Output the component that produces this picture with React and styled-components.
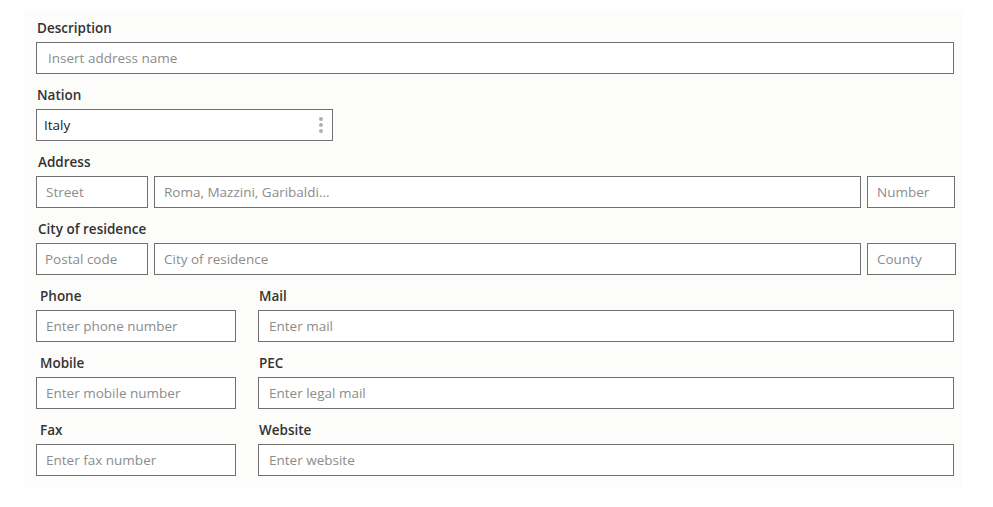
import React from 'react';
import styled, { createGlobalStyle } from 'styled-components';

const GlobalStyle = createGlobalStyle`
  html, body {
    margin: 0;
    padding: 0;
    background: #ffffff;
  }
  body {
    font-family: "Open Sans", "Noto Sans", "Liberation Sans", sans-serif;
  }
  * {
    box-sizing: border-box;
  }
`;

const Panel = styled.div`
  margin: 11px 0 0 24px;
  width: 939px;
  padding: 7px 7px 0 12px;
  background: #fcfdfb;
`;

const Row = styled.div`
  display: flex;
  gap: 6px;
`;

const Field = styled.div`
  display: flex;
  flex-direction: column;
  width: ${(p) => (p.width ? `${p.width}px` : 'auto')};
  flex: ${(p) => (p.width ? '0 0 auto' : '1 1 auto')};
  margin-bottom: 11px;
`;

const Label = styled.label`
  display: block;
  height: 20px;
  line-height: 20px;
  margin: 0 0 4px ${(p) => p.indent || 1}px;
  font-size: 13.5px;
  font-weight: 600;
  color: #333333;
`;

const Input = styled.input`
  height: 32px;
  width: ${(p) => (p.width ? `${p.width}px` : '100%')};
  flex: ${(p) => (p.width ? '0 0 auto' : '1 1 auto')};
  min-width: 0;
  padding: 0 ${(p) => p.pad || 9}px;
  border: 1px solid #707070;
  border-radius: 0;
  background: #ffffff;
  font-family: inherit;
  font-size: 13.5px;
  color: #222222;
  outline: none;
  &::placeholder {
    color: #8c8c8c;
  }
`;

const Select = styled.div`
  display: flex;
  align-items: center;
  justify-content: space-between;
  width: 297px;
  height: 32px;
  padding: 0 9px 0 7px;
  border: 1px solid #707070;
  background: #ffffff;
  font-size: 13.5px;
  color: #222222;
`;

const Dots = styled.span`
  display: flex;
  flex-direction: column;
  gap: 2px;
  span {
    width: 4px;
    height: 4px;
    border-radius: 50%;
    background: #b0b0b0;
  }
`;

const Columns = styled.div`
  display: grid;
  grid-template-columns: 200px 1fr;
  column-gap: 22px;
  width: 918px;
`;

const contacts = [
  ['Phone', 'Enter phone number', 'Mail', 'Enter mail'],
  ['Mobile', 'Enter mobile number', 'PEC', 'Enter legal mail'],
  ['Fax', 'Enter fax number', 'Website', 'Enter website'],
];

export default function App() {
  return (
    <>
      <GlobalStyle />
      <Panel>
        <Field width={918}>
          <Label>Description</Label>
          <Input pad={11} placeholder="Insert address name" />
        </Field>

        <Field width={297}>
          <Label>Nation</Label>
          <Select>
            <span>Italy</span>
            <Dots>
              <span />
              <span />
              <span />
            </Dots>
          </Select>
        </Field>

        <Field width={919}>
          <Label indent={2}>Address</Label>
          <Row>
            <Input width={112} placeholder="Street" />
            <Input placeholder="Roma, Mazzini, Garibaldi..." />
            <Input width={88} placeholder="Number" />
          </Row>
        </Field>

        <Field width={920}>
          <Label indent={2}>City of residence</Label>
          <Row>
            <Input width={112} pad={8} placeholder="Postal code" />
            <Input placeholder="City of residence" />
            <Input width={89} placeholder="County" />
          </Row>
        </Field>

        <Columns>
          {contacts.map(([l1, p1, l2, p2]) => (
            <React.Fragment key={l1}>
              <Field>
                <Label indent={4}>{l1}</Label>
                <Input placeholder={p1} />
              </Field>
              <Field>
                <Label indent={1}>{l2}</Label>
                <Input pad={10} placeholder={p2} />
              </Field>
            </React.Fragment>
          ))}
        </Columns>
      </Panel>
    </>
  );
}
